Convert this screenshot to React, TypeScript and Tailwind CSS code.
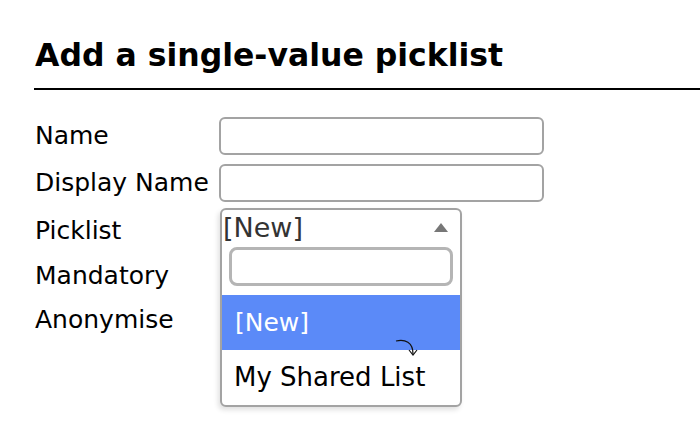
import { useState } from 'react';

const PicklistDropdown = () => {
  const [query, setQuery] = useState('');
  return (
    <div className="absolute left-0 top-0 z-10 h-[199px] w-[242px] overflow-hidden rounded-[6px] border-2 border-[#a3a3a3] bg-white shadow-[-2px_3px_5px_rgba(0,0,0,0.12)]">
      <div className="flex h-[35px] items-center justify-between pl-[1px] pr-[12px]">
        <span className="text-[27px] leading-none text-[#333]">[New]</span>
        <span className="h-0 w-0 border-x-[7px] border-b-[9px] border-x-transparent border-b-[#777]" />
      </div>
      <div className="px-[7px] pt-[2px]">
        <input
          value={query}
          onChange={(e) => setQuery(e.target.value)}
          className="h-[39px] w-full rounded-[8px] border-[3px] border-[#b5b5b5] bg-white px-2 text-[20px] outline-none"
        />
      </div>
      <ul className="mt-[9px]">
        <li className="relative flex h-[55px] items-center bg-[#5b8af8] pl-[13px] text-[25px] text-white">
          [New]
          <svg className="absolute left-[173px] top-[44px]" width="26" height="22" viewBox="0 0 26 22" fill="none">
            <path d="M1 2 C 10 0, 18 3, 18 15" stroke="#111" strokeWidth="1.2" />
            <path d="M14 11 L18 16 L22 11" stroke="#111" strokeWidth="1.2" />
          </svg>
        </li>
        <li className="flex h-[55px] items-center pl-[12px] text-[26px] text-black">My Shared List</li>
      </ul>
    </div>
  );
};

const Row = ({ label, className, children }: { label: string; className: string; children?: React.ReactNode }) => (
  <div className={`flex ${className}`}>
    <div className="flex w-[184px] items-center text-[25px]">{label}</div>
    <div className="relative w-[325px]">{children}</div>
  </div>
);

export default function App() {
  return (
    <div className="min-h-[434px] bg-white pl-[34px] pt-[36px] font-['DejaVu_Sans','Verdana',sans-serif] text-black">
      <h1 className="border-b-2 border-black pb-[14px] pl-[1px] text-[31.5px] font-bold leading-[38px]">Add a single-value picklist</h1>
      <div className="mt-[27px] flex flex-col pl-[1px]">
        <Row label="Name" className="h-[38px]">
          <input className="h-[38px] w-full rounded-[6px] border-2 border-[#a3a3a3] bg-white outline-none" />
        </Row>
        <Row label="Display Name" className="mt-[9px] h-[38px]">
          <input className="h-[38px] w-full rounded-[6px] border-2 border-[#a3a3a3] bg-white outline-none" />
        </Row>
        <Row label="Picklist" className="mt-[6px] h-[46px]">
          <div className="absolute left-[1px] top-0">
            <PicklistDropdown />
          </div>
        </Row>
        <Row label="Mandatory" className="h-[44px]" />
        <Row label="Anonymise" className="h-[44px]" />
      </div>
    </div>
  );
}
